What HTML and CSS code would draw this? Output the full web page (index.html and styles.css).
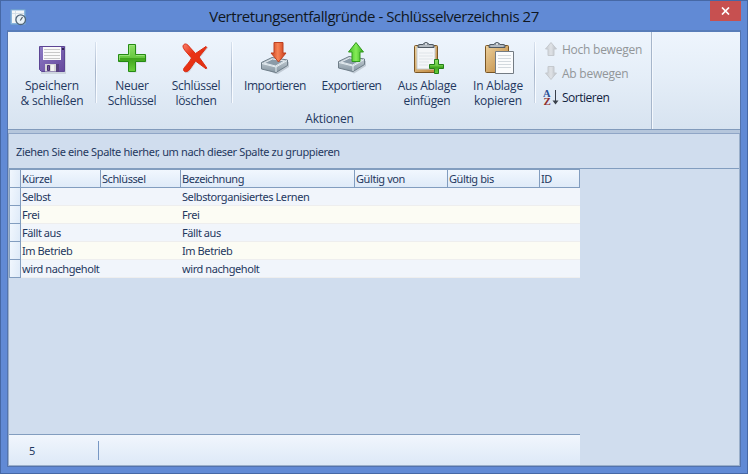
FILE: index.html
```html
<!DOCTYPE html>
<html lang="de">
<head>
<meta charset="utf-8">
<title>Vertretungsentfallgründe - Schlüsselverzeichnis 27</title>
<link rel="stylesheet" href="styles.css">
</head>
<body>
<svg class="defs" width="0" height="0" aria-hidden="true">
  <defs>
    <linearGradient id="purple" x2="1" y2="1"><stop stop-color="#8d7cc4"/><stop offset="1" stop-color="#65479c"/></linearGradient>
    <linearGradient id="green" x2="0" y2="1"><stop stop-color="#8fdf68"/><stop offset=".48" stop-color="#67c841"/><stop offset=".52" stop-color="#3fa31c"/><stop offset="1" stop-color="#6bd03c"/></linearGradient>
    <linearGradient id="red" x2="1" y2="1"><stop stop-color="#f7826c"/><stop offset=".35" stop-color="#ea3216"/><stop offset="1" stop-color="#e0300e"/></linearGradient>
    <linearGradient id="orange" x2="1"><stop stop-color="#c83c18"/><stop offset=".45" stop-color="#f78355"/><stop offset="1" stop-color="#c73715"/></linearGradient>
    <linearGradient id="lime" x2="1"><stop stop-color="#3fba27"/><stop offset=".5" stop-color="#86ec57"/><stop offset="1" stop-color="#32a91c"/></linearGradient>
    <linearGradient id="wood" x2="1" y2="1"><stop stop-color="#ecd09c"/><stop offset="1" stop-color="#bd8439"/></linearGradient>
    <linearGradient id="metal" x2="0" y2="1"><stop stop-color="#cbd4da"/><stop offset="1" stop-color="#8797a3"/></linearGradient>
    <linearGradient id="gray" x2="1"><stop stop-color="#c5c9ce"/><stop offset=".5" stop-color="#dfe2e6"/><stop offset="1" stop-color="#b8bdc3"/></linearGradient>
    <g id="tray">
      <path d="M3 25 17 31.500 29 24v-5L12 16 3 20z" fill="#53606a" opacity=".25" transform="translate(1 1)"/>
      <path d="M2.500 20.500 13 15.500l15.500 2.500v5.500L17 30.500 2.500 27z" fill="url(#metal)" stroke="#6f7e89"/>
      <path d="M5 21 13.500 17l12 2-9 5z" fill="#8b9ba8" stroke="#e1e8ed"/>
      <path d="M3 21.500 17 25v5M17 25l11-6.500" fill="none" stroke="#e5eef3"/>
    </g>
    <g id="board">
      <rect x="4.500" y="3.500" width="23" height="27" rx="1" fill="url(#wood)" stroke="#795524"/>
    </g>
    <g id="clip">
      <path d="M8 5.500V3.500q0-1 2-1h3q1-2 3-2t3 2h3q2 0 2 1v2z" fill="#8a939c" stroke="#505a63"/>
      <path d="M9.500 4h13" stroke="#dce1e5"/><circle cx="16" cy="2" r="1" fill="#e9edf0"/>
    </g>
  </defs>
</svg>
<main class="window">
  <header class="titlebar">
    <svg class="app-icon" width="17" height="17" viewBox="0 0 17 17">
      <rect x=".5" y=".5" width="15" height="15" rx="1" fill="#8bb5df" stroke="#6f9fd0"/>
      <path d="M2 1.500h12V12l-2 2H2z" fill="#f4f7f8"/>
      <path d="M2 4.500h12M5.500 2v10" stroke="#d4dfe8"/>
      <circle cx="10.700" cy="10.700" r="4.800" fill="#e8f2f8" stroke="#4f6478" stroke-width="1.300"/>
      <path d="M12.500 8 10.300 11.500" stroke="#4f5965" stroke-width="1.200"/>
    </svg>
    <h1 class="title">Vertretungsentfallgründe - Schlüsselverzeichnis 27</h1>
    <button class="close" aria-label="Schließen"><svg width="9" height="8" viewBox="0 0 9 8"><path d="M1 .5l7 7M8 .5l-7 7" stroke="#fff" stroke-width="1.700"/></svg></button>
  </header>

  <section class="client">
    <nav class="ribbon">
      <div class="group">
        <div class="tools">
          <button class="tool save">
            <svg width="32" height="32" viewBox="0 0 32 32">
              <path d="M4 5h25v26H5" fill="none" stroke="#000" stroke-width="2" opacity=".1"/>
              <path d="M3.500 4.500h25v25h-23l-2-2z" fill="url(#purple)" stroke="#5c4594"/>
              <path d="M7 5h18v13H7z" fill="#fafafa"/><path d="M8 7.500h16M8 10.500h16M8 13.500h16M8 16.500h16" stroke="#c8c8c8"/>
              <path d="M9 22h14v7.500H9z" fill="#d7d7d7"/><path d="M11.500 23.500h2v5h-2z" fill="#71519c" stroke="#49326f"/><path d="M20 22h3v8h-3z" fill="#58427f"/><path d="M15 23h3v6h-3z" fill="#f3f3f3"/><path d="M26 6h2v2h-2z" fill="#31234f"/>
            </svg>
            <span>Speichern<br>&amp; schließen</span>
          </button>
          <i class="divider"></i>
          <button class="tool new">
            <svg width="32" height="32" viewBox="0 0 32 32"><path d="M12.500 2.500h7v10h10v7h-10v10h-7v-10h-10v-7h10z" transform="translate(1 1)" fill="#000" opacity=".12"/><path d="M12.500 2.500h7v10h10v7h-10v10h-7v-10h-10v-7h10z" fill="url(#green)" stroke="#258b14"/><path d="M13.500 13.500v-10h5M3.500 18v-4.500h10M20 13.500h8.500" fill="none" stroke="#a6e889" opacity=".7"/></svg>
            <span>Neuer<br>Schlüssel</span>
          </button>
          <button class="tool delete">
            <svg width="32" height="32" viewBox="0 0 32 32"><path d="M3.500 3c1.500-2 4-1 6 2l6.500 7L26 4.500l1 .5L19 15l8 11-1 .5L15.500 19l-6 8.500c-2 3.500-6 3.500-6 .5 0-2 5-6 8-11.500L5 8C3 6 2.500 4 3.500 3z" fill="#000" opacity=".1" transform="translate(1 1)"/><path d="M3.500 3c1.500-2 4-1 6 2l6 6.500L26 4.500l.8.800L19 15l7.800 11-.8.800L15.500 19l-5.500 8c-2 3.500-6.500 3.500-6.500.5 0-2 5-5.500 8-11.500L5 8.500C3 6 2.500 4 3.500 3z" fill="url(#red)" stroke="#db2d13"/></svg>
            <span>Schlüssel<br>löschen</span>
          </button>
          <i class="divider"></i>
          <button class="tool import">
            <svg width="32" height="32" viewBox="0 0 32 32"><use href="#tray"/><path d="M15 .5h9v10.500h3L19.500 20 12 11h3z" fill="url(#orange)" stroke="#bc4021"/></svg>
            <span>Importieren</span>
          </button>
          <button class="tool export">
            <svg width="32" height="32" viewBox="0 0 32 32"><use href="#tray" transform="translate(0 -1)"/><path d="M20 .5 27.500 10H24v9.500h-8V10h-3.500z" fill="url(#lime)" stroke="#31991c"/></svg>
            <span>Exportieren</span>
          </button>
          <button class="tool paste">
            <svg width="34" height="32" viewBox="0 0 34 32"><use href="#board"/><path d="M7 5h18v22H7z" fill="#f4f6f8" stroke="#c5ccd2"/><path d="M9 11h14M9 14h14M9 17h14M9 20h10M9 23h9" stroke="#dfe4e8"/><use href="#clip"/><path d="M24.500 17.500h4v5h5v4h-5v5h-4v-5h-5v-4h5z" fill="url(#green)" stroke="#237f18"/></svg>
            <span>Aus Ablage<br>einfügen</span>
          </button>
          <button class="tool copy">
            <svg width="34" height="32" viewBox="0 0 34 32"><use href="#board"/><use href="#clip"/><path d="M14.500 9.500h18v22h-18z" fill="#fbfcfd" stroke="#737b83"/><path d="M17 13.500h13M17 16.500h13M17 19.500h13M17 22.500h13M17 25.500h13" stroke="#d3d9de"/></svg>
            <span>In Ablage<br>kopieren</span>
          </button>
          <i class="divider"></i>
          <div class="commands">
            <button class="command disabled"><svg width="16" height="16" viewBox="0 0 16 16"><path d="M8 1.500 13.500 8H11v6.500H5V8H2.500z" fill="url(#gray)" stroke="#c5c9ce"/></svg>Hoch bewegen</button>
            <button class="command disabled"><svg width="16" height="16" viewBox="0 0 16 16"><path d="M8 14.500 2.500 8H5V1.500h6V8h2.500z" fill="url(#gray)" stroke="#c5c9ce"/></svg>Ab bewegen</button>
            <button class="command sort"><svg width="16" height="16" viewBox="0 0 16 16"><text x="0" y="7.500" class="letter-a">A</text><text x=".5" y="15.500" class="letter-z">Z</text><path d="M12.500 1v13" stroke="#39404a"/><path d="M9.500 11.500h6l-3 4z" fill="#39404a"/></svg>Sortieren</button>
          </div>
        </div>
        <div class="group-name">Aktionen</div>
      </div>
    </nav>
    <div class="splitter"></div>
    <section class="grid-view">
      <div class="group-panel"><span>Ziehen Sie eine Spalte hierher, um nach dieser Spalte zu gruppieren</span></div>
      <div class="table">
        <div class="row head"><b class="indicator"></b><span>Kürzel</span><span>Schlüssel</span><span>Bezeichnung</span><span>Gültig von</span><span>Gültig bis</span><span>ID</span></div>
        <div class="row"><b class="indicator"></b><span>Selbst</span><span></span><span>Selbstorganisiertes Lernen</span></div>
        <div class="row"><b class="indicator"></b><span>Frei</span><span></span><span>Frei</span></div>
        <div class="row"><b class="indicator"></b><span>Fällt aus</span><span></span><span>Fällt aus</span></div>
        <div class="row"><b class="indicator"></b><span>Im Betrieb</span><span></span><span>Im Betrieb</span></div>
        <div class="row"><b class="indicator"></b><span>wird nachgeholt</span><span></span><span>wird nachgeholt</span></div>
      </div>
      <footer class="summary"><span class="count">5</span></footer>
    </section>
  </section>
</main>
</body>
</html>
```
FILE: styles.css
```css
* { box-sizing: border-box; }
body { margin: 0; }
button { margin: 0; padding: 0; border: 0; background: none; font: inherit; color: inherit; }
.defs { position: absolute; }
.window {
  display: flex; flex-direction: column;
  width: 748px; height: 474px; padding: 0 6px 6px;
  border: 1px solid #4668a5; background: #618ad5;
  font: 12px/15px "Open Sans", "Noto Sans", sans-serif; color: #1f3860;
}
.titlebar { display: flex; height: 29px; flex: none; }
.app-icon { margin: 8px 0 0 3px; flex: none; }
.title { flex: 1; margin: 5px 0 0 11px; text-align: center; font-size: 15px; line-height: 20px; font-weight: 400; letter-spacing: -.45px; color: #101722; }
.close { display: flex; align-items: center; justify-content: center; width: 31px; height: 20px; background: #c75050; }
.client { flex: 1; display: flex; flex-direction: column; border: 1px solid #5373ad; border-top: 2px solid #587db9; background: #d0ddee; }
.ribbon { height: 97px; flex: none; display: flex; background: linear-gradient(#eef5fd, #e5eef8 45%, #d7e3f0); }
.group { display: flex; flex-direction: column; width: 644px; border-right: 1px solid #a6b6cb; box-shadow: 1px 0 #f4f8fd; }
.tools { display: flex; height: 79px; }
.tool { display: flex; flex-direction: column; align-items: center; padding-top: 10px; white-space: nowrap; letter-spacing: -.3px; }
.tool svg { display: block; flex: none; }
.tool span { margin-top: 4px; text-align: center; }
.save { width: 88px; margin-right: -1px; letter-spacing: -.2px; }
.new { width: 64px; margin-left: 3px; }
.delete { width: 64px; margin-right: 3px; }
.import { width: 76px; margin-left: 4px; letter-spacing: -.45px; }
.export { width: 77px; letter-spacing: -.5px; }
.paste { width: 74px; }
.copy { width: 68px; margin-right: 2px; letter-spacing: -.2px; }
.divider { width: 2px; height: 61px; margin-top: 10px; border-right: 1px solid #f8fbff; background: linear-gradient(#d8e2ef, #a6b5ca 50%, #c9d5e4); }
.commands { display: flex; flex-direction: column; padding: 5px 0 0 7px; }
.command { display: flex; align-items: center; gap: 3px; height: 24px; white-space: nowrap; letter-spacing: -.25px; }
.disabled { color: #929699; }
.letter-a { font: bold 10.5px "Liberation Serif", serif; fill: #2b5196; }
.letter-z { font: bold 11px "Liberation Serif", serif; fill: #8f3030; }
.command.sort { letter-spacing: -.5px; color: #12233f; }
.sort svg { letter-spacing: 0; }
.group-name { text-align: center; letter-spacing: -.2px; }
.splitter { height: 5px; flex: none; border-top: 1px solid #819abb; border-bottom: 1px solid #8fa5c6; background: #b5c6dc; }
.grid-view { flex: 1; display: flex; flex-direction: column; border: solid #9aafca; border-width: 0 1px 1px; font: 11px/17px "Noto Sans", "Open Sans", sans-serif; }
.group-panel { height: 35px; flex: none; padding: 9px 0 0 7px; border-bottom: 1px solid #829dbf; letter-spacing: -.36px; }
.table { width: 571px; border-top: 1px solid #829dbf; }
.row { display: grid; grid-template-columns: 12px 80px 80px 174px 93px 92px 40px; height: 18px; background: #f1f5fb; letter-spacing: -.42px; }
.row:nth-child(odd) { background-color: #fcfcf4; }
.row span { padding-left: 1px; white-space: nowrap; }
.row:not(.head) { background-image: linear-gradient(#eeeeee, #eeeeee); background-size: 100% 1px; background-position: bottom; background-repeat: no-repeat; }
.row.head { background: linear-gradient(#f1f7fe, #deeaf8); }
.row.head span { border-right: 1px solid #829dbf; border-bottom: 1px solid #829dbf; }
.indicator { border: solid #829dbf; border-width: 0 1px 1px; background: linear-gradient(100deg, #f1f7fe, #deeaf8); }
.summary { display: flex; align-items: center; width: 571px; height: 31px; margin-top: auto; border-top: 1px solid #829dbf; background: linear-gradient(#f1f6fd, #dde9f7); }
.count { width: 90px; height: 19px; padding-left: 20px; border-right: 1px solid #7898c4; line-height: 19px; }
```
